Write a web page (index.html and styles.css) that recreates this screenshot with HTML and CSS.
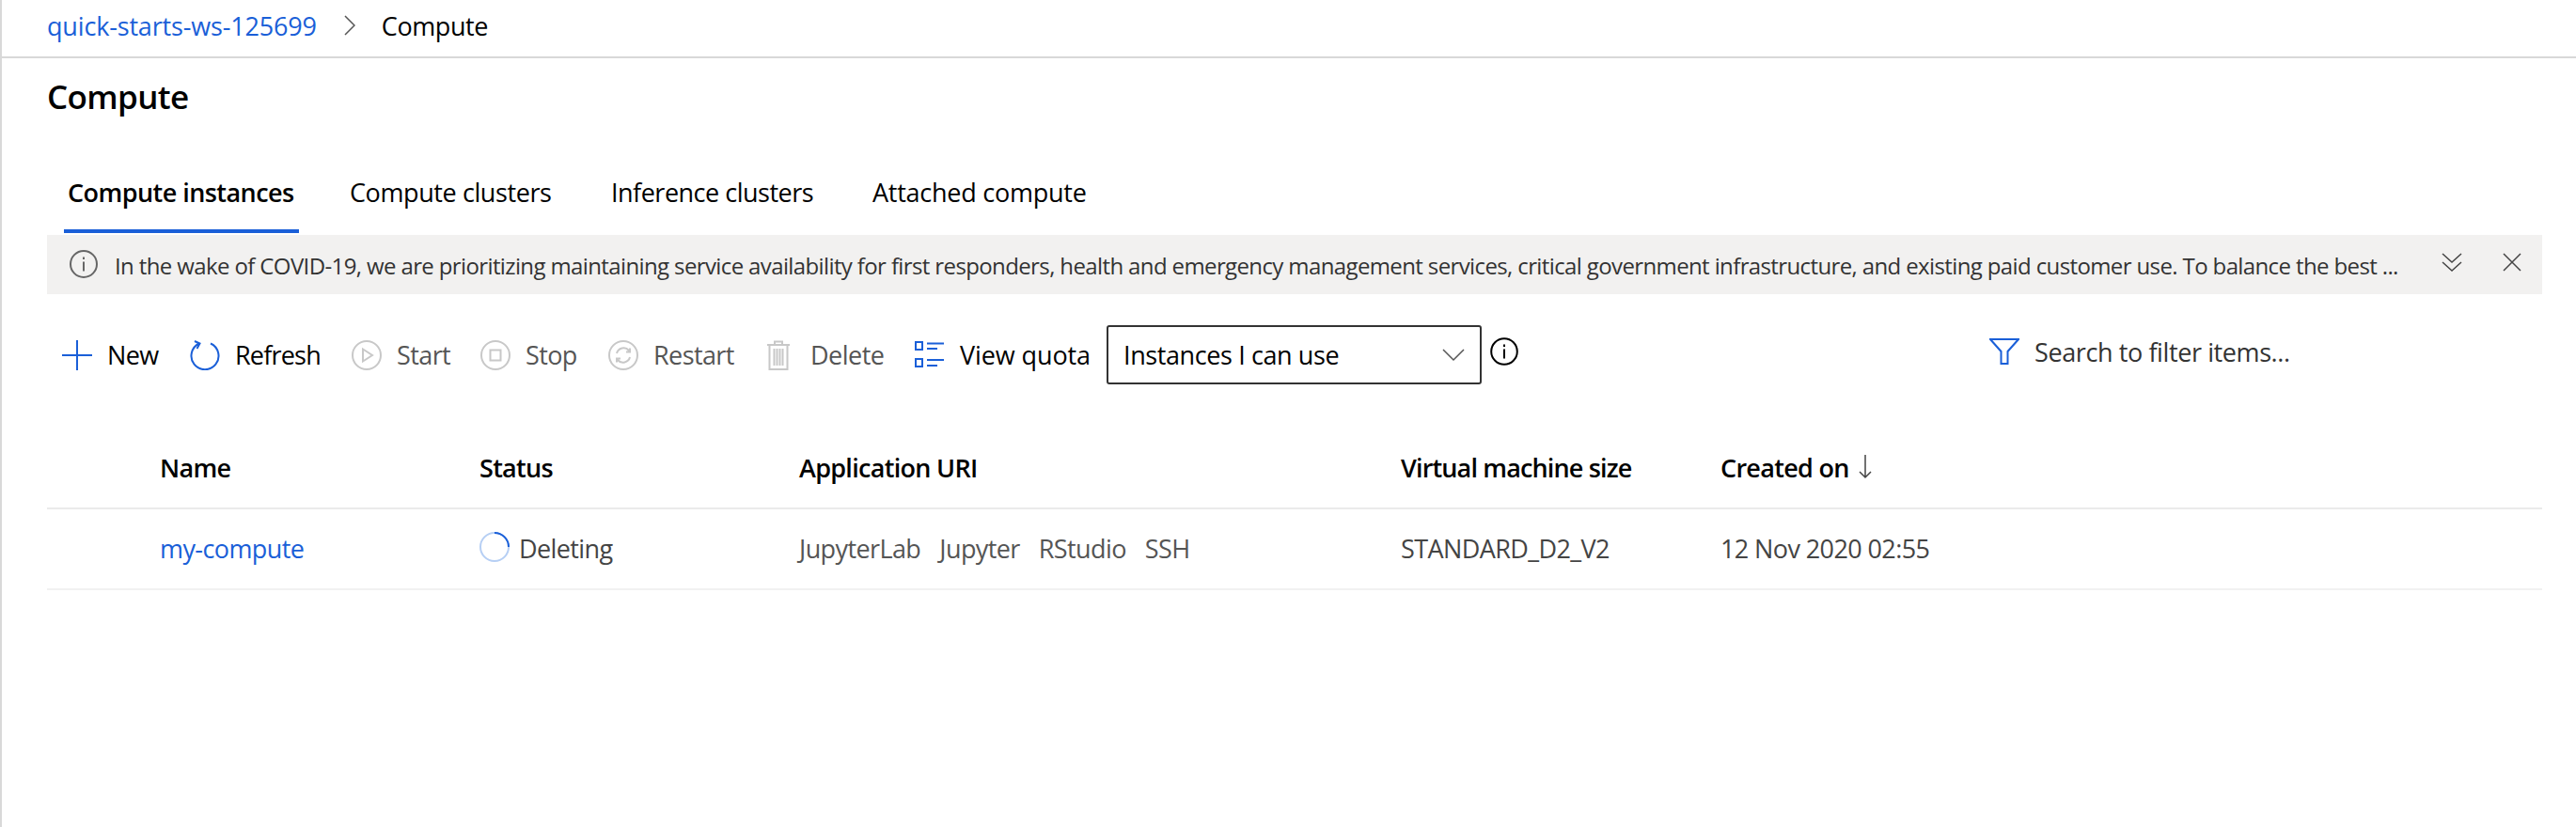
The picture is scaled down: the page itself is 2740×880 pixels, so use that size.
FILE: index.html
```html
<!DOCTYPE html>
<html lang="en">
<head>
<meta charset="utf-8">
<title>Compute</title>
<link rel="stylesheet" href="styles.css">
</head>
<body>
<nav class="crumbs">
  <a class="link crumb-link">quick-starts-ws-125699</a>
  <svg class="crumb-sep" viewBox="0 0 12 22"><path d="M1 1l10 10L1 21"/></svg>
  <span class="crumb-current">Compute</span>
</nav>
<main class="page">
  <h1 class="title">Compute</h1>
  <div class="tabs">
    <div class="tab tab-active">Compute instances</div>
    <div class="tab tab-clusters">Compute clusters</div>
    <div class="tab tab-inference">Inference clusters</div>
    <div class="tab tab-attached">Attached compute</div>
  </div>
  <div class="notice">
    <svg class="notice-info" viewBox="0 0 30 30"><circle cx="15" cy="15" r="14"/><path d="M15 12.500v10M15 7.500v2.500"/></svg>
    <span class="notice-text">In the wake of COVID-19, we are prioritizing maintaining service availability for first responders, health and emergency management services, critical government infrastructure, and existing paid customer use. To balance the best ...</span>
    <svg class="notice-btn chevrons" viewBox="0 0 22 20"><path d="M1 1l10 9 10-9M1 10l10 9 10-9"/></svg>
    <svg class="notice-btn close" viewBox="0 0 20 20"><path d="M1 1l18 18M19 1L1 19"/></svg>
  </div>
  <div class="toolbar">
    <button class="cmd cmd-new">
      <svg class="icon blue" viewBox="0 0 32 32"><path d="M0 16h32M16 0v32"/></svg><span>New</span>
    </button>
    <button class="cmd cmd-refresh">
      <svg class="icon blue" viewBox="0 0 32 32"><path d="M10 3.500A14.500 14.500 0 1 0 22 3.500M5 1l5.500 2.500L7.500 9"/></svg><span>Refresh</span>
    </button>
    <button class="cmd off cmd-start">
      <svg class="icon" viewBox="0 0 32 32"><circle cx="16" cy="16" r="15"/><path d="M12 9.500l10 6.500-10 6.500z"/></svg><span>Start</span>
    </button>
    <button class="cmd off cmd-stop">
      <svg class="icon" viewBox="0 0 32 32"><circle cx="16" cy="16" r="15"/><path d="M10.500 10.500h11v11h-11z"/></svg><span>Stop</span>
    </button>
    <button class="cmd off cmd-restart">
      <svg class="icon" viewBox="0 0 32 32"><circle cx="16" cy="16" r="15"/><path d="M9 14a7.500 7.500 0 0 1 13-3l1 1.500M23 8.500v4h-4M23 18a7.500 7.500 0 0 1-13 3l-1-1.500M9 23.500v-4h4"/></svg><span>Restart</span>
    </button>
    <button class="cmd off cmd-delete">
      <svg class="icon icon-trash" viewBox="0 0 26 32"><path d="M1 5h24M9 5V1.500h8V5M3.500 5v26h19V5M8.500 9v18M11.500 9v18M14.500 9v18M17.500 9v18"/></svg><span>Delete</span>
    </button>
    <button class="cmd cmd-quota">
      <svg class="icon blue" viewBox="0 0 32 32"><path d="M1 2h7v8H1zM1 20h7v8H1zM13 3.500h18M13 9h11M13 21h18M13 27h11"/></svg><span>View quota</span>
    </button>
    <div class="select">
      <span>Instances I can use</span>
      <svg class="select-caret" viewBox="0 0 24 14"><path d="M1 1l11 11L23 1"/></svg>
    </div>
    <svg class="help" viewBox="0 0 30 30"><circle cx="15" cy="15" r="13.800"/><path d="M15 12.500v10M15 7.500v2.500"/></svg>
    <div class="filter">
      <svg class="filter-icon" viewBox="0 0 32 28"><path d="M1 1h30L19.500 14v13h-7V14z"/></svg>
      <span>Search to filter items...</span>
    </div>
  </div>
  <section class="table">
    <div class="row head">
      <span>Name</span>
      <span>Status</span>
      <span>Application URI</span>
      <span class="col-vm">Virtual machine size</span>
      <span class="sorted">Created on
        <svg class="sort-arrow" viewBox="0 0 14 26"><path d="M7 0v24M1 18l6 6 6-6"/></svg>
      </span>
    </div>
    <div class="row body">
      <a class="link">my-compute</a>
      <span class="status">
        <svg class="spinner" viewBox="0 0 32 32"><circle class="spin-track" cx="16" cy="16" r="15"/><path class="spin-head" d="M16 1a15 15 0 0 1 15 15"/></svg>
        <span>Deleting</span>
      </span>
      <span class="apps"><span>JupyterLab</span><span>Jupyter</span><span>RStudio</span><span>SSH</span></span>
      <span>STANDARD_D2_V2</span>
      <span>12 Nov 2020 02:55</span>
    </div>
  </section>
</main>
</body>
</html>
```
FILE: styles.css
```css
* { box-sizing: border-box; }
html, body { margin: 0; height: 100%; }
body {
  font-family: "Open Sans", "Noto Sans", sans-serif;
  font-size: 27px;
  color: #000;
  background: #fff;
  border-left: 2px solid #d8d8d8;
  letter-spacing: -0.4px;
}
svg { display: block; fill: none; flex: none; }
.link { color: #1a5fd8; }

.crumbs {
  height: 62px;
  padding: 0 0 6px 48px;
  display: flex;
  align-items: center;
  border-bottom: 2px solid #d8d8d8;
}
.crumb-link { letter-spacing: -0.17px; }
.crumb-sep { width: 12px; height: 22px; margin: 0 28px 0 29px; stroke: #555; stroke-width: 1.5; }

.page { padding: 0 36px 0 48px; }
.title { margin: 0; height: 88px; padding-top: 14px; font-size: 35px; line-height: 54px; font-weight: 600; letter-spacing: -0.65px; }

.tabs { display: flex; height: 100px; padding: 0 0 2px 18px; }
.tab { padding: 0 4px; line-height: 109px; height: 98px; margin-right: 54px; white-space: nowrap; }
.tab-active { font-weight: 600; width: 250px; border-bottom: 4px solid #1a5fd8; margin-right: 50px; letter-spacing: -0.55px; }
.tab-clusters { width: 224px; }
.tab-inference { width: 224px; letter-spacing: -0.5px; }
.tab-attached { letter-spacing: -0.25px; }

.notice {
  height: 63px;
  display: flex;
  align-items: center;
  background: #f2f1f0;
  font-size: 24px;
  color: #333;
  padding-left: 24px;
}
.notice-info { width: 30px; height: 30px; stroke: #666; stroke-width: 2; margin-top: -2px; }
.notice-text { margin-left: 18px; padding-top: 2px; width: 2475px; white-space: nowrap; letter-spacing: -0.62px; }
.notice-btn { stroke: #444; stroke-width: 1.5; margin-top: -6px; }
.chevrons { width: 22px; height: 20px; }
.close { width: 20px; height: 20px; margin-left: 43px; }

.toolbar { height: 141px; padding: 49px 0 0 16px; display: flex; align-items: flex-start; }
.cmd {
  all: unset;
  display: flex;
  align-items: center;
  gap: 16px;
  height: 32px;
  line-height: 32px;
  white-space: nowrap;
  letter-spacing: -0.6px;
}
.cmd-new { width: 136px; }
.cmd-refresh { width: 172px; letter-spacing: -0.8px; }
.cmd-start { width: 137px; }
.cmd-stop { width: 136px; }
.cmd-restart { width: 168px; }
.cmd-delete { width: 158px; gap: 21px; letter-spacing: -0.5px; }
.cmd-quota { width: 204px; letter-spacing: -0.1px; }
.icon { width: 32px; height: 32px; stroke: #c8c8c8; stroke-width: 2; }
.icon.blue { stroke: #1a5fd8; }
.icon-trash { width: 26px; }
.off { color: #555; }
.select {
  width: 399px;
  height: 63px;
  margin-top: -16px;
  border: 2px solid #333;
  border-radius: 3px;
  padding: 0 16px;
  display: flex;
  align-items: center;
  justify-content: space-between;
}
.select-caret { width: 24px; height: 14px; stroke: #555; stroke-width: 1.5; }
.help { width: 30px; height: 30px; margin: -3px 0 0 9px; stroke: #000; stroke-width: 2; }
.filter { margin-left: auto; width: 588px; height: 28px; margin-top: -2px; display: flex; align-items: center; gap: 16px; color: #333; }
.filter span { margin-top: 1px; }
.filter-icon { width: 32px; height: 28px; stroke: #1a5fd8; stroke-width: 2; }

.row { display: grid; padding-left: 120px; grid-template-columns: 340px 340px 640px 340px 1fr; align-items: center; }
.head { height: 88px; font-weight: 600; border-bottom: 2px solid #ebebeb; letter-spacing: -0.7px; }
.col-vm { letter-spacing: -0.85px; }
.body { height: 86px; border-bottom: 2px solid #f1f1f1; color: #444; letter-spacing: -0.6px; }
.body > * { margin-top: -1px; }
.sorted { display: flex; align-items: center; gap: 10px; }
.sort-arrow { width: 14px; height: 26px; stroke: #444; stroke-width: 1.5; }
.status { display: flex; align-items: center; gap: 10px; }
.spinner { width: 32px; height: 32px; margin-top: -4px; stroke-width: 2; }
.spin-track { stroke: #b6cff4; }
.spin-head { stroke: #1a5fd8; }
.apps { display: flex; gap: 20px; color: #555; }
```
